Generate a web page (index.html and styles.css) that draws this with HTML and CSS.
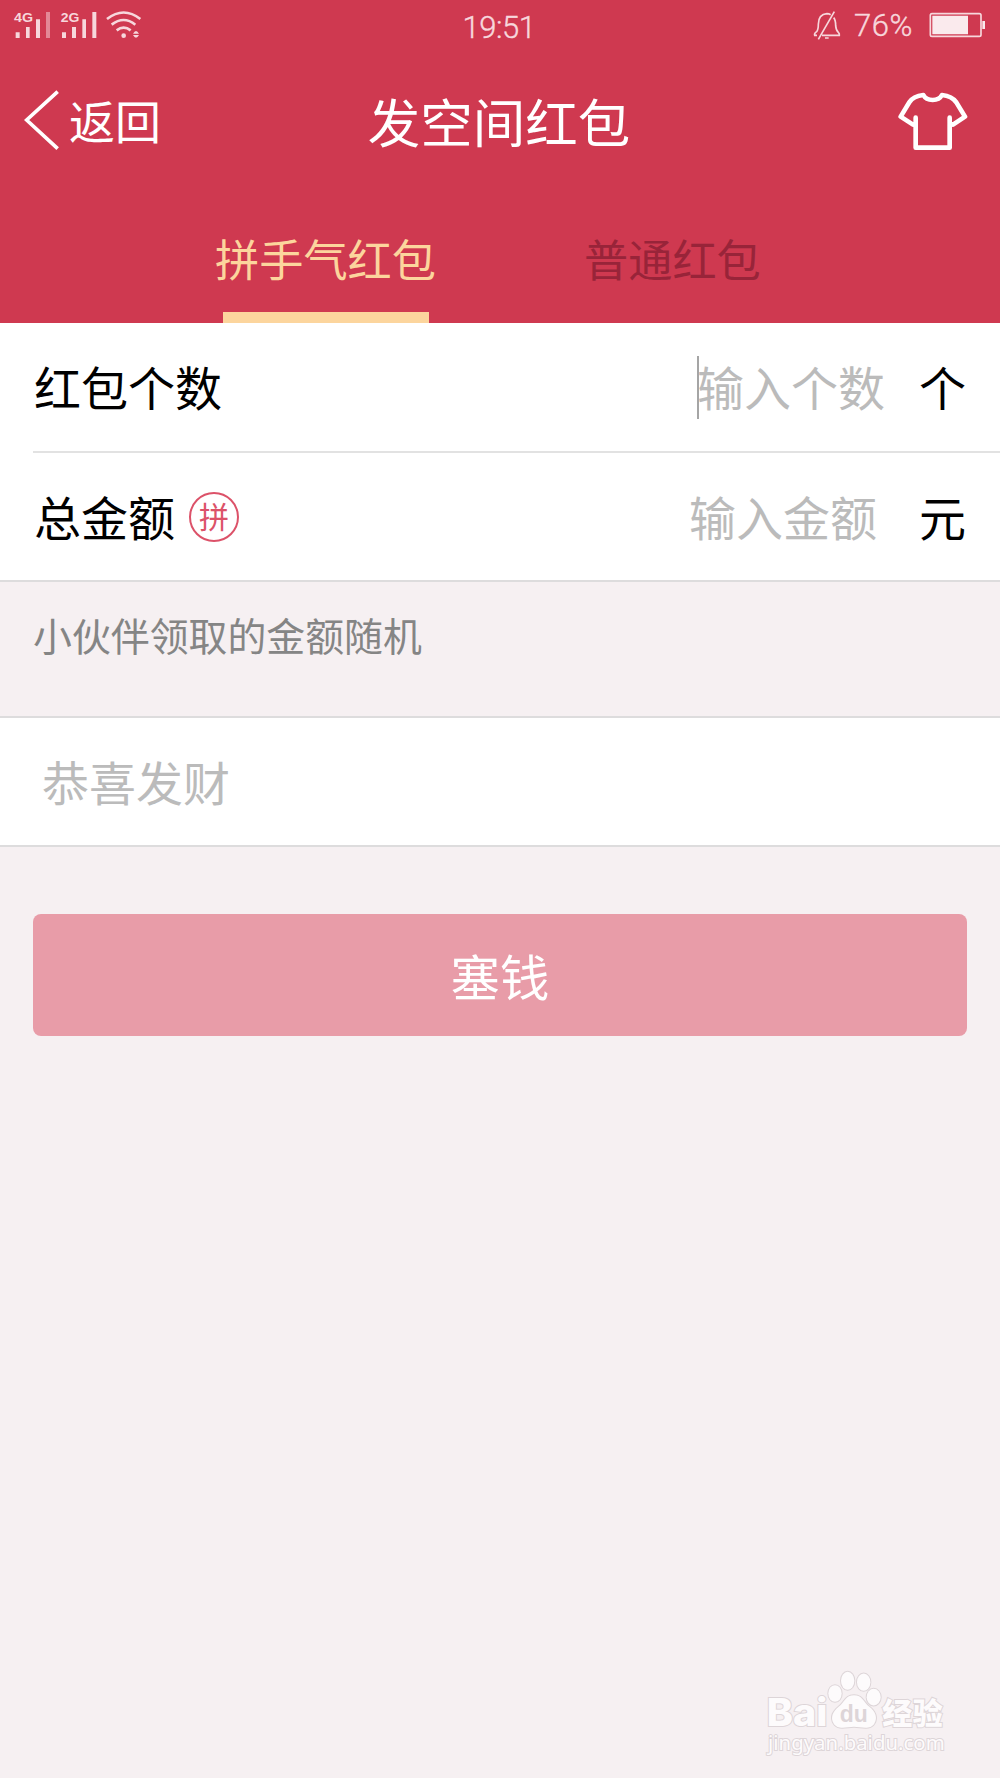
FILE: index.html
```
<!DOCTYPE html>
<html lang="zh-CN">
<head>
    <meta charset="UTF-8">
    <meta name="viewport" content="width=device-width, initial-scale=1.0">
    <title>发空间红包</title>
    <link rel="stylesheet" href="styles.css">
</head>
<body>
    <div class="header">
        <div class="status-bar">
            <div class="status-left">
                <svg class="signal" viewBox="39 30 117 87">
                    <text x="42" y="66" textLength="57" lengthAdjust="spacingAndGlyphs">4G</text>
                    <path d="M47 97h12v17H47zM78 81h11v33H78zM108 58h12v56h-12z"/>
                    <path class="dim" d="M138 36h12v78h-12z"/>
                </svg>
                <svg class="signal" viewBox="180 30 117 87">
                    <text x="182" y="66" textLength="56" lengthAdjust="spacingAndGlyphs">2G</text>
                    <path d="M186 97h12v17h-12zM216 81h12v33h-12zM247 58h11v56h-11zM277 36h12v78h-12z"/>
                </svg>
                <svg class="wifi" viewBox="315 27 111 90">
                    <path class="arc" d="M321 57Q371 18 421 57M335 74Q371 46 406 74M350 91Q371 75 392 91"/>
                    <circle cx="371" cy="107" r="7"/>
                    <path d="M399 101q9-16 18 0zM399 105q9 16 18 0z"/>
                </svg>
            </div>
            <div class="time">19:51</div>
            <div class="status-right">
                <svg class="bell" viewBox="99 30 84 90">
                    <path d="M111 106H104Q102 100 110 95Q115 89 115 73Q115 43 141 41Q147 41 152 44M161 53Q167 60 167 77Q168 91 175 97Q179 101 178 106H126M163 35L115 118M135 114H146"/>
                </svg>
                <span class="percent">76%</span>
                <svg class="battery" viewBox="447 36 171 78">
                    <rect class="case" x="451" y="41" width="152" height="68" rx="5"/>
                    <path d="M457 47h107v56H457zM607 63h8v24h-8z"/>
                </svg>
            </div>
        </div>

        <div class="nav">
            <a class="back" href="#">
                <svg class="arrow" viewBox="72 267 108 186"><path d="M173 275L80 360L173 446"/></svg>
                <span>返回</span>
            </a>
            <h1>发空间红包</h1>
            <a class="skin" href="#">
                <svg class="shirt" viewBox="351 270 213 183">
                    <path d="M430 282Q400 285 388 304L362 347L399 371L407 367V350V440H509V350V367L519 371L555 347L529 304Q516 285 486 282Q478 297 458 297Q438 297 430 282Z"/>
                </svg>
            </a>
        </div>

        <div class="tabs">
            <a class="tab active" href="#">拼手气红包</a>
            <a class="tab" href="#">普通红包</a>
        </div>
    </div>

    <div class="form">
        <div class="row">
            <span class="label">红包个数</span>
            <span class="caret"></span>
            <span class="placeholder count">输入个数</span>
            <span class="unit">个</span>
        </div>
        <div class="row">
            <span class="label">总金额</span>
            <span class="badge">拼</span>
            <span class="placeholder amount">输入金额</span>
            <span class="unit">元</span>
        </div>
    </div>

    <p class="tip">小伙伴领取的金额随机</p>

    <div class="message"><span class="placeholder">恭喜发财</span></div>

    <button class="submit">塞钱</button>

    <svg class="watermark" viewBox="78 60 540 260">
        <text class="brand" x="80" y="229" textLength="182" lengthAdjust="spacingAndGlyphs">Bai</text>
        <ellipse cx="285" cy="130" rx="20" ry="25"/>
        <ellipse cx="323" cy="92" rx="20" ry="27"/>
        <ellipse cx="371" cy="96" rx="20" ry="26"/>
        <ellipse cx="401" cy="141" rx="21" ry="25"/>
        <path d="M342 135C367 135 370 155 388 170C406 184 414 203 403 220C391 241 363 230 342 230C320 230 294 241 281 220C270 202 279 184 296 170C314 155 317 135 342 135Z"/>
        <text class="du" x="299" y="217" textLength="84" lengthAdjust="spacingAndGlyphs">du</text>
        <text class="jingyan" x="427" y="222" textLength="181">经验</text>
        <text class="site" x="84" y="301" textLength="530">jingyan.baidu.com</text>
    </svg>
</body>
</html>
```
FILE: styles.css
```
* {
    box-sizing: border-box;
}
body {
    margin: 0;
    min-height: 1778px;
    position: relative;
    background: #f6f0f2;
    color: #000;
    font-family: "Noto Sans CJK SC", sans-serif;
    font-size: 47px;
}
a {
    color: inherit;
    text-decoration: none;
}
svg {
    display: block;
}

/* header */
.header {
    height: 323px;
    background: #cf3950;
    color: #fff;
}
.status-bar {
    height: 52px;
    display: grid;
    grid-template-columns: 1fr auto 1fr;
    align-items: start;
    color: #f7d7dc;
    fill: #f7d7dc;
    font-family: Roboto, sans-serif;
    font-weight: 300;
    font-size: 31px;
    line-height: 52px;
}
.status-left {
    display: flex;
    padding: 10px 0 0 13px;
}
.signal {
    width: 39px;
    height: 29px;
    margin-right: 8px;
}
.signal text {
    font: bold 40px "Liberation Sans", sans-serif;
}
.signal .dim {
    opacity: 0.5;
}
.wifi {
    width: 37px;
    height: 30px;
    margin: -1px 0 0 -2px;
}
.wifi .arc {
    fill: none;
    stroke: #f7d7dc;
    stroke-width: 8;
}
.time {
    letter-spacing: -0.5px;
    padding-top: 2px;
    margin-right: 2px;
    -webkit-text-stroke: 0.4px #f7d7dc;
}
.status-right {
    display: flex;
    justify-content: flex-end;
    padding-right: 14px;
}
.bell {
    width: 28px;
    height: 30px;
    margin-top: 10px;
    fill: none;
    stroke: #f7d7dc;
    stroke-width: 5;
}
.percent {
    width: 61px;
    margin: 0 14px 0 13px;
    letter-spacing: 0.6px;
    -webkit-text-stroke: 0.4px #f7d7dc;
}
.battery {
    width: 57px;
    height: 26px;
    margin-top: 12px;
    fill: #faeaed;
}
.battery .case {
    fill: none;
    stroke: #f7d7dc;
    stroke-width: 5;
}
.nav {
    height: 138px;
    display: grid;
    grid-template-columns: 1fr auto 1fr;
    align-items: center;
}
.back {
    display: flex;
    align-items: center;
    padding-left: 24px;
    font-size: 46px;
    line-height: 60px;
}
.back span {
    margin-left: 9px;
    padding-bottom: 5px;
}
.arrow {
    width: 36px;
    height: 62px;
    margin-top: -2px;
    fill: none;
    stroke: #fff;
    stroke-width: 11;
}
.nav h1 {
    margin: 0 2px 2px 0;
    font-size: 52.5px;
    font-weight: 400;
    line-height: 70px;
}
.skin {
    justify-self: end;
    padding-right: 32px;
}
.shirt {
    width: 71px;
    height: 61px;
    fill: none;
    stroke: #fff;
    stroke-width: 14;
    stroke-linejoin: round;
}
.tabs {
    height: 133px;
    display: flex;
    padding-left: 140px;
}
.tab {
    width: 369px;
    padding-left: 75px;
    color: #982439;
    font-size: 44.2px;
    line-height: 136px;
}
.tab.active {
    color: #fcd59d;
    background: linear-gradient(#fcd59d, #fcd59d) 83px bottom / 206px 11px no-repeat;
}

/* form */
.form {
    background: #fff;
    border-bottom: 2px solid #dddcdd;
}
.row {
    height: 128px;
    display: flex;
    align-items: center;
    margin-left: 33px;
    padding-right: 34px;
    line-height: 68px;
}
.row + .row {
    height: 129px;
    border-top: 2px solid #e2e2e2;
}
.label, .unit, .row .placeholder {
    padding-bottom: 2px;
}
.label {
    padding-left: 1px;
}
.badge {
    width: 50px;
    height: 50px;
    margin-left: 14px;
    border: 2px solid #dc5269;
    border-radius: 50%;
    color: #dc5269;
    font-size: 30px;
    line-height: 43px;
    text-align: center;
}
.caret {
    width: 2px;
    height: 63px;
    margin-left: auto;
    margin-right: -2px;
    background: #a5a5a5;
}
.placeholder {
    color: #bbb;
}
.count {
    margin-right: 34px;
}
.amount {
    margin-left: auto;
    margin-right: 42px;
}
.tip {
    height: 134px;
    margin: 0;
    padding: 22px 33px;
    color: #858585;
    font-size: 38.9px;
    line-height: 60px;
}
.message {
    height: 131px;
    padding-left: 42px;
    background: #fff;
    border-top: 2px solid #dddcdd;
    border-bottom: 2px solid #dddcdd;
    line-height: 126px;
}
.submit {
    display: block;
    width: 934px;
    height: 122px;
    margin: 67px auto 0;
    padding: 0;
    border: none;
    border-radius: 8px;
    background: #e89ca8;
    color: #fff;
    font: 49.4px/120px "Noto Sans CJK SC", sans-serif;
}

.watermark {
    position: absolute;
    left: 766px;
    top: 1670px;
    width: 180px;
    height: 87px;
    overflow: visible;
    fill: #fdfbfc;
    stroke: #ddd5d8;
    stroke-width: 6;
    paint-order: stroke;
}
.brand {
    font: 800 114px Inter, sans-serif;
}
.du {
    font: bold 74px "Liberation Sans", sans-serif;
    fill: #ddd5d8;
    stroke: none;
}
.jingyan {
    font: 900 90px "Noto Sans CJK SC", sans-serif;
}
.site {
    font: 61px "Noto Sans", sans-serif;
}
```
